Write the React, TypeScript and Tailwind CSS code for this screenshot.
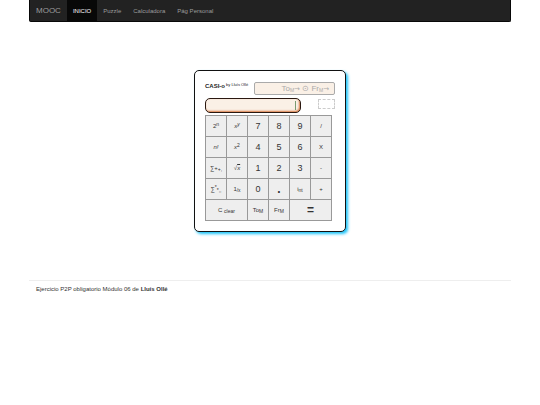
import React, { useState } from 'react';

interface KeyDef {
  id: string;
  label: React.ReactNode;
  big?: boolean;
  wide?: boolean;
}

const Sup = ({ children }: { children: React.ReactNode }) => (
  <sup className="text-[5px] leading-none">{children}</sup>
);

const Sub = ({ children }: { children: React.ReactNode }) => (
  <sub className="text-[5px] leading-none">{children}</sub>
);

const Arrow = () => <span className="font-['DejaVu_Sans',sans-serif] text-[7px]">→</span>;

const keys: KeyDef[] = [
  { id: 'pow2', label: <>2<Sup>n</Sup></> },
  { id: 'powy', label: <i>x<Sup>y</Sup></i> },
  { id: '7', label: '7', big: true },
  { id: '8', label: '8', big: true },
  { id: '9', label: '9', big: true },
  { id: 'div', label: '/' },
  { id: 'fact', label: <i>n!</i> },
  { id: 'square', label: <><i>x</i><Sup>2</Sup></> },
  { id: '4', label: '4', big: true },
  { id: '5', label: '5', big: true },
  { id: '6', label: '6', big: true },
  { id: 'mul', label: 'X' },
  { id: 'sum', label: <>∑+<Sub>+,</Sub></> },
  { id: 'sqrt', label: <>√<i className="overline">x</i></> },
  { id: '1', label: '1', big: true },
  { id: '2', label: '2', big: true },
  { id: '3', label: '3', big: true },
  { id: 'sub', label: '-' },
  { id: 'prod', label: <>∑<Sup>*</Sup><Sub>*,,</Sub></> },
  { id: 'inv', label: <>1<Sub>/x</Sub></> },
  { id: '0', label: '0', big: true },
  { id: 'dot', label: <b className="text-[12px]">.</b>, big: true },
  { id: 'int', label: <>i<Sub>nt</Sub></> },
  { id: 'add', label: '+' },
  { id: 'clear', label: <>C <Sub>clear</Sub></>, wide: true },
  { id: 'tom', label: <>To<Sub>M</Sub></> },
  { id: 'frm', label: <>Fr<Sub>M</Sub></> },
  { id: 'eq', label: <b className="text-[12px]">=</b>, big: true, wide: true },
];

const NavItem = ({ label, active = false }: { label: string; active?: boolean }) => (
  <a
    href="#"
    className={`flex items-center px-[6px] pt-px ${active ? 'bg-[#080808] text-white' : 'text-[#9d9d9d]'}`}
  >
    {label}
  </a>
);

const Key = ({ def, onPress }: { def: KeyDef; onPress: (id: string) => void }) => (
  <button
    type="button"
    onClick={() => onPress(def.id)}
    className={`h-[21px] whitespace-nowrap border-r border-b border-[#999] bg-[#eee] text-center leading-none text-[#333]
      ${def.big ? 'text-[9px]' : 'text-[6px]'}
      ${def.wide ? 'col-span-2' : ''}`}
  >
    {def.label}
  </button>
);

const Calculator = () => {
  const [value, setValue] = useState('');

  const press = (id: string) => {
    if (/^\d$/.test(id)) setValue(value + id);
    if (id === 'dot') setValue(value + '.');
    if (id === 'clear') setValue('');
  };

  return (
    <section className="w-[152px] rounded-[5px] border border-[#111] bg-white px-[10px] pt-[11px] pb-[10px] shadow-[2px_2px_3px_0px_#20c4f8]">
      <div className="flex justify-between">
        <h1 className="whitespace-nowrap text-[6px] leading-[8px] font-bold text-[#222]">
          CASI-o<sup className="text-[4px] leading-none font-normal"> by Lluís Ollé</sup>
        </h1>
        <div className="flex h-[13px] w-[81px] items-center justify-end rounded-[2px] border border-[#aaa] bg-[#faf0e6] pr-[5px] text-[8px] leading-none whitespace-nowrap text-[#aaa]">
          <span>
            To<Sub>M</Sub><Arrow /> ⊙ Fr<Sub>M</Sub><Arrow />
          </span>
        </div>
      </div>

      <div className="mt-[3px] flex items-start justify-between">
        <div className="flex h-[15px] w-[96px] items-center rounded-[5px] border border-[#2a1810] bg-[#faf0e6] pr-[4px] shadow-[inset_-1px_-1px_2px_0px_#d87840]">
          <input
            type="text"
            aria-label="Pantalla"
            value={value}
            onChange={(e) => setValue(e.target.value)}
            className="min-w-0 flex-1 bg-transparent text-right text-[8px] leading-none outline-none"
          />
          <span className="h-[9px] w-px bg-[#7a9a70]" />
        </div>
        <div className="mt-px h-[10px] w-[17px] border border-dashed border-[#ccc]" />
      </div>

      <div className="mt-[2px] grid w-[127px] grid-cols-6 border-t border-l border-[#999]">
        {keys.map((k) => (
          <Key key={k.id} def={k} onPress={press} />
        ))}
      </div>
    </section>
  );
};

const App: React.FC = () => {
  return (
    <div className="bg-white px-[29px] font-['Liberation_Sans',Arial,sans-serif] text-[6px] leading-[9px] text-[#333]">
      <nav className="flex h-[22px] rounded-b-[2px] border border-t-0 border-[#080808] bg-[#222]">
        <a href="#" className="flex items-center px-[6px] text-[8px] text-[#9d9d9d]">
          MOOC
        </a>
        <NavItem label="INICIO" active />
        <NavItem label="Puzzle" />
        <NavItem label="Calculadora" />
        <NavItem label="Pág Personal" />
      </nav>

      <main className="flex justify-center pt-12 pb-12">
        <Calculator />
      </main>

      <footer className="border-t border-[#eee] px-[7px] py-1">
        Ejercicio P2P obligatorio Módulo 06 de <b>Lluís Ollé</b>
      </footer>
    </div>
  );
};

export default App;
